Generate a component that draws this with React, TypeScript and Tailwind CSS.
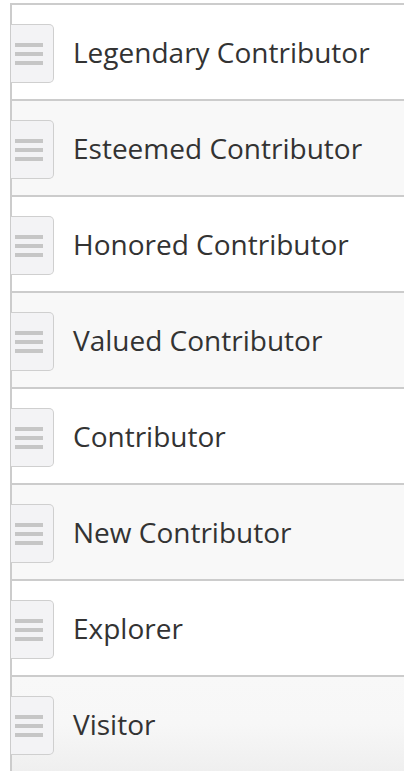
import React from "react";

const items = [
  "Legendary Contributor",
  "Esteemed Contributor",
  "Honored Contributor",
  "Valued Contributor",
  "Contributor",
  "New Contributor",
  "Explorer",
  "Visitor",
];

function Handle() {
  return (
    <div className="-ml-[1px] mt-[3px] flex h-[59px] w-[43px] shrink-0 flex-col items-center justify-center gap-[5px] rounded-r-[5px] border border-l-0 border-[#cfcfcf] bg-[#f3f3f5] pr-[6px]">
      <div className="h-[4px] w-[28px] bg-[#c6c6c6]" />
      <div className="h-[4px] w-[28px] bg-[#c6c6c6]" />
      <div className="h-[4px] w-[28px] bg-[#c6c6c6]" />
    </div>
  );
}

export default function App() {
  return (
    <div className="h-[772px] w-[404px] overflow-hidden bg-white pl-[10px] pt-[3px]">
      <div className="border-l-2 border-[#cccccc]">
        {items.map((label, i) => (
          <div
            key={label}
            className={
              "flex h-[96px] items-center border-t-2 border-[#cccccc] " +
              (i === items.length - 1
                ? "bg-gradient-to-b from-[#f8f8f8] via-[#f7f7f7] to-[#efefef]"
                : i % 2 === 1
                ? "bg-[#f8f8f8]"
                : "bg-white")
            }
          >
            <Handle />
            <span
              className="ml-[19px] text-[28px] leading-none text-[#333333]"
              style={{ fontFamily: '"Open Sans", sans-serif' }}
            >
              {label}
            </span>
          </div>
        ))}
      </div>
    </div>
  );
}
